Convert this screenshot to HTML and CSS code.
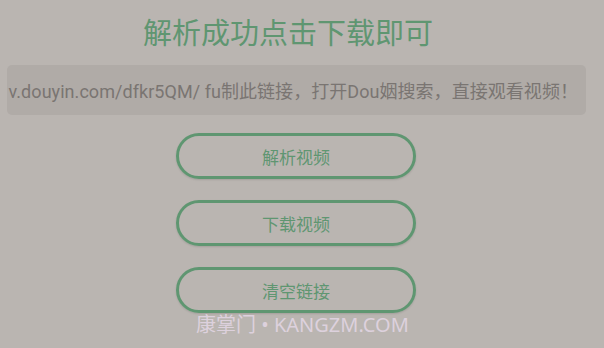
FILE: index.html
```html
<!DOCTYPE html>
<html lang="zh">
<head>
<meta charset="utf-8">
<link rel="stylesheet" href="styles.css">
</head>
<body>
<div class="page">
  <h1 class="title">解析成功点击下载即可</h1>
  <div class="link-box"><span class="link-text">v.douyin.com/dfkr5QM/ fu制此链接，打开Dou姻搜索，直接观看视频！</span></div>
  <div class="actions">
    <button class="btn">解析视频</button>
    <button class="btn">下载视频</button>
    <button class="btn">清空链接</button>
  </div>
  <div class="watermark">康掌门 • KANGZM.COM</div>
</div>
</body>
</html>
```
FILE: styles.css
```css
html, body {
  margin: 0;
  padding: 0;
  background: #bab5b1;
  width: 604px;
  height: 348px;
  overflow: hidden;
}
.page {
  width: 592px;
  display: flex;
  flex-direction: column;
  align-items: center;
  font-family: Roboto, "Noto Sans CJK SC", sans-serif;
  position: relative;
  height: 348px;
}
.title {
  margin: 14px 0 0 0;
  padding-right: 16px;
  font-size: 29px;
  line-height: 40px;
  font-weight: 400;
  color: #5f9671;
}
.link-box {
  margin-top: 11px;
  width: 579px;
  height: 50px;
  box-sizing: border-box;
  background: #b0aba7;
  border-radius: 5px;
  display: flex;
  justify-content: flex-start;
  align-items: center;
  overflow: hidden;
  padding-left: 2px;
  white-space: nowrap;
}
.link-text {
  font-size: 18px;
  letter-spacing: 0.05px;
  color: #7a7572;
  flex-shrink: 0;
}
.actions {
  margin-top: 18px;
  display: flex;
  flex-direction: column;
  gap: 21px;
}
.btn {
  width: 240px;
  height: 46px;
  box-sizing: border-box;
  border: 3px solid #5f9671;
  border-radius: 23px;
  background: transparent;
  color: #5f9671;
  font-family: "Noto Sans CJK SC", sans-serif;
  font-size: 17px;
  padding: 0;
  box-shadow: 0 1px 2px rgba(0,0,0,0.12);
}
.watermark {
  position: absolute;
  left: 196px;
  top: 311px;
  font-family: "Noto Sans", "Noto Sans CJK SC", sans-serif;
  font-size: 20px;
  line-height: 28px;
  color: #ddd1dd;
  white-space: nowrap;
}
```
